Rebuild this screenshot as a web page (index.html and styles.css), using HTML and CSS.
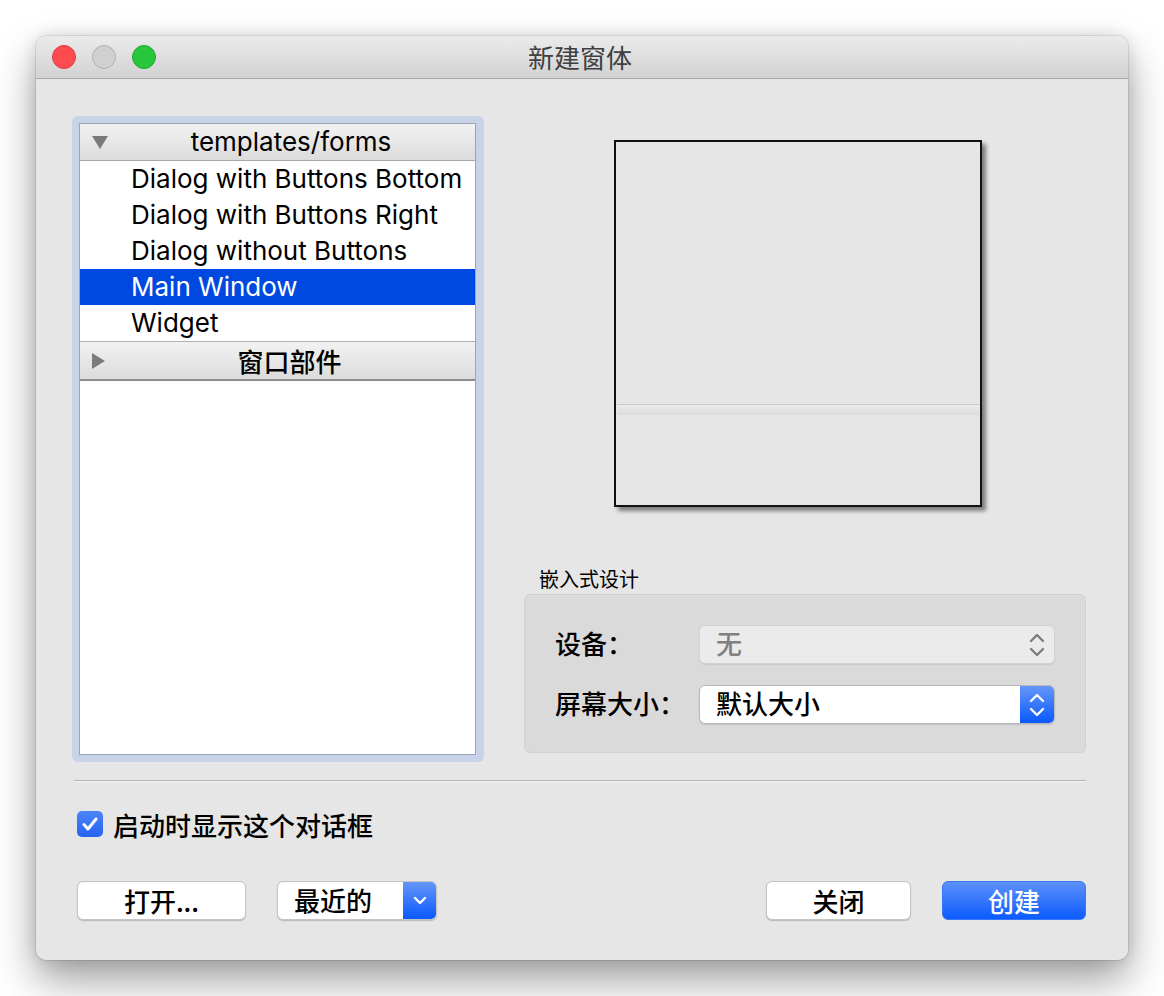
FILE: index.html
```html
<!DOCTYPE html>
<html lang="zh">
<head>
<meta charset="utf-8">
<title>新建窗体</title>
<link rel="stylesheet" href="styles.css">
</head>
<body>
<div class="window">
  <div class="titlebar">
    <div class="lights">
      <span class="light red"></span>
      <span class="light gray"></span>
      <span class="light green"></span>
    </div>
    <div class="title">新建窗体</div>
    <div></div>
  </div>
  <div class="content">
    <div class="main">
      <div class="list-ring">
        <div class="list">
          <div class="tree-header open">
            <svg class="arrow" width="18" height="15" viewBox="0 0 18 15"><polygon points="1,1 17,1 9,14" fill="#7b7b7b"/></svg>
            <span class="header-text">templates/forms</span>
          </div>
          <div class="item">Dialog with Buttons Bottom</div>
          <div class="item">Dialog with Buttons Right</div>
          <div class="item">Dialog without Buttons</div>
          <div class="item selected">Main Window</div>
          <div class="item">Widget</div>
          <div class="tree-header closed">
            <svg class="arrow" width="15" height="18" viewBox="0 0 15 18"><polygon points="1,1 14,9 1,17" fill="#7b7b7b"/></svg>
            <span class="header-text cjk">窗口部件</span>
          </div>
        </div>
      </div>
      <div class="side">
        <div class="preview">
          <div class="preview-body"></div>
          <div class="preview-status"></div>
          <div class="preview-foot"></div>
        </div>
        <div class="group-label">嵌入式设计</div>
        <div class="group">
          <div class="field">
            <span class="field-label">设备：</span>
            <div class="combo disabled">
              <span class="combo-text">无</span>
              <span class="combo-btn">
                <svg width="16" height="26" viewBox="0 0 16 26"><path d="M2 9 L8 3 L14 9 M2 17 L8 23 L14 17" fill="none" stroke="#7d7d7d" stroke-width="2.4" stroke-linecap="round" stroke-linejoin="round"/></svg>
              </span>
            </div>
          </div>
          <div class="field">
            <span class="field-label">屏幕大小：</span>
            <div class="combo active">
              <span class="combo-text">默认大小</span>
              <span class="combo-btn blue">
                <svg width="16" height="26" viewBox="0 0 16 26"><path d="M2 9 L8 3 L14 9 M2 17 L8 23 L14 17" fill="none" stroke="#ffffff" stroke-width="2.4" stroke-linecap="round" stroke-linejoin="round"/></svg>
              </span>
            </div>
          </div>
        </div>
      </div>
    </div>
    <div class="separator"></div>
    <label class="check-row">
      <span class="checkbox">
        <svg width="26" height="26" viewBox="0 0 26 26"><path d="M7 13.5 L11 18 L19 8" fill="none" stroke="#fff" stroke-width="3" stroke-linecap="round" stroke-linejoin="round"/></svg>
      </span>
      <span class="check-text">启动时显示这个对话框</span>
    </label>
    <div class="buttons">
      <div class="btn-left">
        <button class="btn open">打开...</button>
        <div class="recent">
          <span class="recent-text">最近的</span>
          <span class="recent-btn">
            <svg width="16" height="12" viewBox="0 0 16 12"><path d="M3 3 L8 8 L13 3" fill="none" stroke="#fff" stroke-width="2.4" stroke-linecap="round" stroke-linejoin="round"/></svg>
          </span>
        </div>
      </div>
      <div class="btn-right">
        <button class="btn close">关闭</button>
        <button class="btn primary">创建</button>
      </div>
    </div>
  </div>
</div>
</body>
</html>
```

FILE: styles.css
```css
* { box-sizing: border-box; }

html, body {
  margin: 0;
  padding: 0;
  background: #ffffff;
}

body {
  font-family: "Inter", "Noto Sans CJK SC", sans-serif;
  font-size: 26px;
  color: #000;
  min-height: 996px;
}

.window {
  margin: 36px 0 0 36px;
  width: 1092px;
  height: 924px;
  background: #e6e6e6;
  border-radius: 10px;
  box-shadow: 0 20px 42px rgba(0, 0, 0, 0.38), 0 0 16px rgba(0, 0, 0, 0.12), 0 0 0 1px rgba(0, 0, 0, 0.08);
  overflow: hidden;
}

.titlebar {
  height: 43px;
  display: grid;
  grid-template-columns: 1fr auto 1fr;
  align-items: center;
  background: linear-gradient(#ebebeb, #d2d2d2);
  border-bottom: 1px solid #a9a9a9;
}

.lights {
  display: flex;
  gap: 16px;
  padding-left: 16px;
}

.light {
  width: 24px;
  height: 24px;
  border-radius: 50%;
  display: block;
}

.light.red { background: #fe4b50; border: 1px solid #e0393e; }
.light.gray { background: #d0d0d0; border: 1px solid #b0b0b0; }
.light.green { background: #28c63b; border: 1px solid #1ca82c; }

.title {
  font-family: "Noto Sans CJK SC", sans-serif;
  font-size: 26px;
  color: #404040;
  line-height: 42px;
  margin-right: 4px;
}

.content {
  padding: 37px 42px 0 36px;
}

.main {
  display: flex;
  gap: 40px;
  height: 646px;
}

.list-ring {
  width: 412px;
  height: 646px;
  background: #c8d2e8;
  border-radius: 6px;
  padding: 7px 8px 7px 7px;
}

.list {
  height: 100%;
  background: #fff;
  border: 1px solid #9ba4b8;
}

.tree-header {
  display: flex;
  align-items: center;
  background: linear-gradient(#f2f2f2, #dcdcdc);
}

.tree-header.open {
  height: 37px;
  border-bottom: 1px solid #a8a8a8;
}

.tree-header.closed {
  height: 40px;
  border-top: 1px solid #b0b0b0;
  border-bottom: 2px solid #8e8e8e;
}

.tree-header .arrow {
  margin-left: 11px;
  flex: none;
}

.tree-header .header-text {
  flex: 1;
  text-align: center;
  padding-right: 2px;
  line-height: 34px;
}

.tree-header .header-text.cjk {
  font-family: "Noto Sans CJK SC", sans-serif;
  font-weight: 500;
}

.item {
  height: 36px;
  line-height: 36px;
  padding-left: 51px;
  white-space: nowrap;
}

.item.selected {
  background: #0049e0;
  color: #fff;
}

.side {
  width: 562px;
  display: flex;
  flex-direction: column;
}

.preview {
  margin: 24px 0 0 90px;
  width: 368px;
  height: 367px;
  border: 2px solid #111;
  background: #e6e6e6;
  box-shadow: 4px 4px 4px rgba(0, 0, 0, 0.45);
  display: flex;
  flex-direction: column;
  padding: 0 1px;
}

.preview-body {
  height: 262px;
}

.preview-status {
  height: 11px;
  border-top: 1px solid #c9c9c9;
  background: linear-gradient(#ececec, #dcdcdc);
}

.preview-foot {
  flex: 1;
}

.group-label {
  margin: 60px 0 0 15px;
  font-family: "Noto Sans CJK SC", sans-serif;
  font-size: 20px;
  line-height: 24px;
  height: 27px;
}

.group {
  height: 159px;
  background: #dadada;
  border: 1px solid #d0d0d0;
  border-radius: 6px;
  padding: 30px 30px 0 30px;
  display: flex;
  flex-direction: column;
  gap: 21px;
}

.field {
  display: flex;
  align-items: center;
  height: 39px;
}

.field-label {
  width: 144px;
  font-family: "Noto Sans CJK SC", sans-serif;
  font-weight: 500;
  line-height: 36px;
  padding-bottom: 4px;
}

.combo {
  width: 356px;
  height: 39px;
  border-radius: 6px;
  display: flex;
  align-items: center;
  overflow: hidden;
}

.combo.disabled {
  background: #ebebeb;
  border: 1px solid #d2d2d2;
  color: #808080;
  box-shadow: 0 1px 1px rgba(0, 0, 0, 0.08);
}

.combo.active {
  background: #fff;
  border: 1px solid #b8b8b8;
  box-shadow: 0 1px 1px rgba(0, 0, 0, 0.12);
}

.combo-text {
  flex: 1;
  padding-left: 16px;
  font-family: "Noto Sans CJK SC", sans-serif;
  font-weight: 500;
  line-height: 36px;
  padding-bottom: 4px;
}

.combo-btn {
  width: 34px;
  height: 100%;
  display: flex;
  align-items: center;
  justify-content: center;
}

.combo-btn.blue {
  background: linear-gradient(#6496f8, #0a59fe);
}

.separator {
  margin: 18px 0 0 2px;
  border-top: 1px solid #b1b1b1;
  border-bottom: 1px solid #f4f4f4;
}

.check-row {
  display: flex;
  align-items: center;
  margin: 28px 0 0 5px;
  height: 28px;
}

.checkbox {
  width: 26px;
  height: 26px;
  border-radius: 5px;
  background: linear-gradient(#4d85f8, #2563f0);
  display: flex;
  align-items: center;
  justify-content: center;
  margin-right: 10px;
}

.check-text {
  font-family: "Noto Sans CJK SC", sans-serif;
  font-weight: 500;
}

.buttons {
  display: flex;
  justify-content: space-between;
  margin: 43px 0 0 5px;
}

.btn-left, .btn-right {
  display: flex;
  gap: 31px;
}

.btn {
  font-family: "Noto Sans CJK SC", sans-serif;
  font-size: 26px;
  font-weight: 500;
  height: 39px;
  border-radius: 6px;
  padding: 0;
  line-height: 36px;
  cursor: default;
}

.btn.open {
  width: 169px;
  background: #fff;
  border: 1px solid #c4c4c4;
  box-shadow: 0 1px 1px rgba(0, 0, 0, 0.2);
  color: #000;
}

.btn.close {
  width: 145px;
  background: #fff;
  border: 1px solid #c4c4c4;
  box-shadow: 0 1px 1px rgba(0, 0, 0, 0.2);
  color: #000;
}

.btn.primary {
  width: 144px;
  background: linear-gradient(#5d91f9, #0b5bff);
  border: 1px solid #3b78f5;
  color: #fff;
}

.recent {
  width: 160px;
  height: 39px;
  border-radius: 6px;
  border: 1px solid #c4c4c4;
  box-shadow: 0 1px 1px rgba(0, 0, 0, 0.2);
  background: #fff;
  display: flex;
  overflow: hidden;
}

.recent-text {
  flex: 1;
  padding-left: 16px;
  font-family: "Noto Sans CJK SC", sans-serif;
  font-weight: 500;
  line-height: 36px;
}

.recent-btn {
  width: 33px;
  background: linear-gradient(#6496f8, #0a59fe);
  display: flex;
  align-items: center;
  justify-content: center;
}
```
